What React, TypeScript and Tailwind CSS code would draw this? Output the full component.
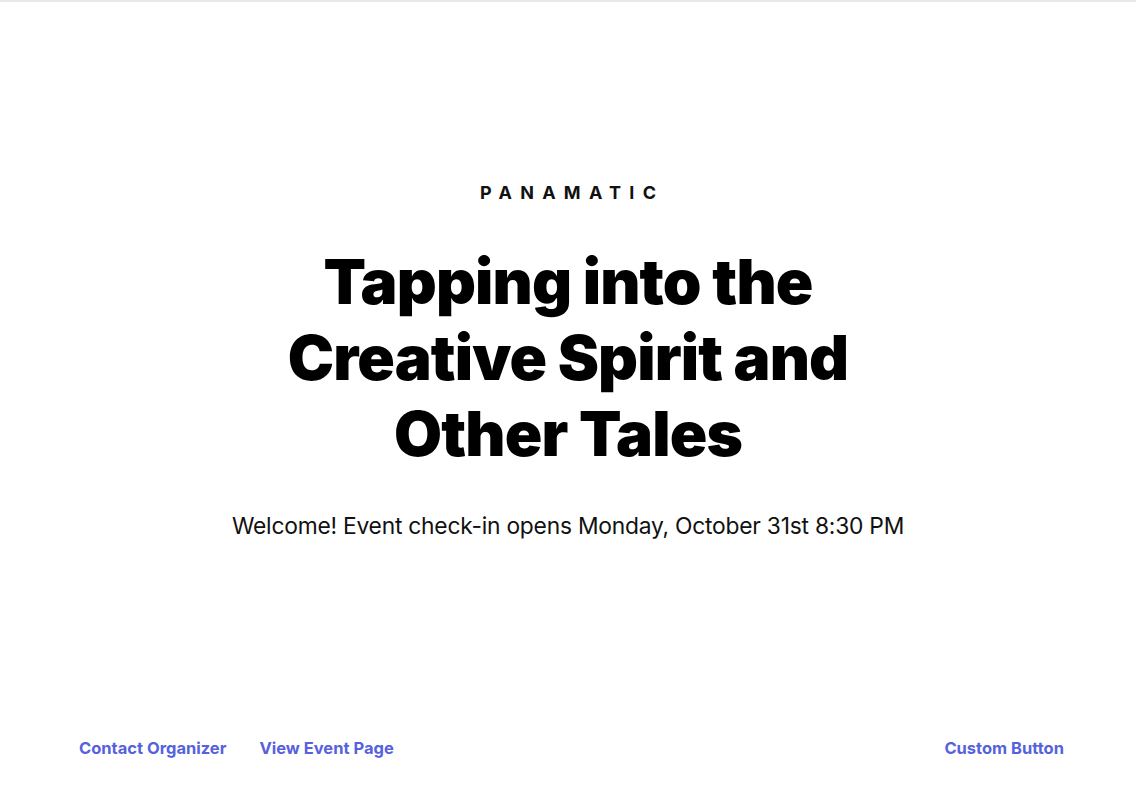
import React from "react";

export default function App() {
  return (
    <div className="w-[1136px] h-[794px] bg-white border-t-2 border-[#e8e8ea] flex flex-col" style={{ fontFamily: "Inter, 'Liberation Sans', sans-serif" }}>
      <div className="flex-1 flex flex-col items-center pt-[182px]">
        <div className="text-[18px] font-bold tracking-[0.46em] pl-[0.46em] text-[#111] leading-none">PANAMATIC</div>
        <h1 className="mt-[42px] text-[62px] font-black text-black text-center leading-[76px] tracking-[-0.014em] w-[640px]">
          Tapping into the Creative Spirit and Other Tales
        </h1>
        <p className="mt-[37px] text-[22.8px] text-[#111] font-normal tracking-[-0.01em]">
          Welcome! Event check-in opens Monday, October 31st 8:30 PM
        </p>
      </div>
      <div className="flex items-center justify-between pl-[79px] pr-[72px] pb-[33px]">
        <div className="flex gap-[33px]">
          <a className="text-[16.5px] font-bold text-[#5561dd]">Contact Organizer</a>
          <a className="text-[16.5px] font-bold text-[#5561dd]">View Event Page</a>
        </div>
        <a className="text-[16.5px] font-bold text-[#5561dd]">Custom Button</a>
      </div>
    </div>
  );
}
